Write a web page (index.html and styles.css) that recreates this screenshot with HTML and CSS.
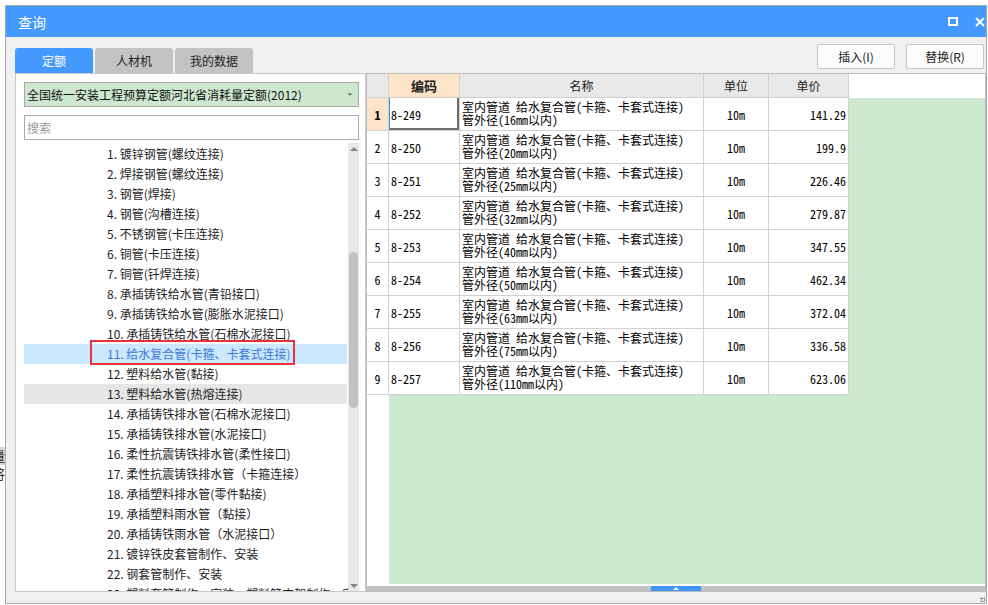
FILE: index.html
```html
<!DOCTYPE html>
<html lang="zh-CN">
<head>
<meta charset="utf-8">
<title>查询</title>
<link rel="stylesheet" href="styles.css">
</head>
<body>
<div class="bg-peek"><span>量</span><span>将</span></div>
<div class="window">
  <div class="titlebar">
    <span class="title">查询</span>
    <div class="win-ctrls">
      <svg width="10" height="9" viewBox="0 0 10 9"><rect x="1" y="1" width="8" height="7" fill="none" stroke="#fff" stroke-width="2"/></svg>
      <svg width="10" height="10" viewBox="0 0 10 10"><path d="M1 1L9 9M9 1L1 9" stroke="#fff" stroke-width="2"/></svg>
    </div>
  </div>
  <div class="toolbar">
    <div class="tabs">
      <div class="tab active">定额</div>
      <div class="tab">人材机</div>
      <div class="tab">我的数据</div>
    </div>
    <div class="actions">
      <button class="btn">插入(I)</button>
      <button class="btn">替换(R)</button>
    </div>
  </div>
  <div class="panels">
    <div class="left">
      <div class="select"><span>全国统一安装工程预算定额河北省消耗量定额(2012)</span><i class="caret"></i></div>
      <div class="search">搜索</div>
      <div class="list">
        <ul class="items">
          <li>1. 镀锌钢管(螺纹连接)</li>
          <li>2. 焊接钢管(螺纹连接)</li>
          <li>3. 钢管(焊接)</li>
          <li>4. 钢管(沟槽连接)</li>
          <li>5. 不锈钢管(卡压连接)</li>
          <li>6. 铜管(卡压连接)</li>
          <li>7. 铜管(钎焊连接)</li>
          <li>8. 承插铸铁给水管(青铅接口)</li>
          <li>9. 承插铸铁给水管(膨胀水泥接口)</li>
          <li>10. 承插铸铁给水管(石棉水泥接口)</li>
          <li class="selected"><span class="boxed">11. 给水复合管(卡箍、卡套式连接)</span></li>
          <li>12. 塑料给水管(黏接)</li>
          <li class="hover">13. 塑料给水管(热熔连接)</li>
          <li>14. 承插铸铁排水管(石棉水泥接口)</li>
          <li>15. 承插铸铁排水管(水泥接口)</li>
          <li>16. 柔性抗震铸铁排水管(柔性接口)</li>
          <li>17. 柔性抗震铸铁排水管（卡箍连接）</li>
          <li>18. 承插塑料排水管(零件黏接)</li>
          <li>19. 承插塑料雨水管（黏接）</li>
          <li>20. 承插铸铁雨水管（水泥接口）</li>
          <li>21. 镀锌铁皮套管制作、安装</li>
          <li>22. 钢套管制作、安装</li>
          <li>23. 塑料套管制作、安装，塑料管支架制作、安装</li>
        </ul>
        <div class="vscroll">
          <i class="arr up"></i>
          <div class="track"><div class="thumb"></div></div>
          <i class="arr down"></i>
        </div>
      </div>
    </div>
    <div class="right">
      <div class="grid">
        <div class="c hd"></div>
        <div class="c hd sel">编码</div>
        <div class="c hd">名称</div>
        <div class="c hd">单位</div>
        <div class="c hd">单价</div>
        <div class="hfill"></div>

        <div class="c num sel">1</div><div class="c code focus">8-249</div><div class="c name">室内管道 给水复合管(卡箍、卡套式连接)<br>管外径(16mm以内)</div><div class="c unit">10m</div><div class="c price">141.29</div>
        <div class="c num">2</div><div class="c code">8-250</div><div class="c name">室内管道 给水复合管(卡箍、卡套式连接)<br>管外径(20mm以内)</div><div class="c unit">10m</div><div class="c price">199.9</div>
        <div class="c num">3</div><div class="c code">8-251</div><div class="c name">室内管道 给水复合管(卡箍、卡套式连接)<br>管外径(25mm以内)</div><div class="c unit">10m</div><div class="c price">226.46</div>
        <div class="c num">4</div><div class="c code">8-252</div><div class="c name">室内管道 给水复合管(卡箍、卡套式连接)<br>管外径(32mm以内)</div><div class="c unit">10m</div><div class="c price">279.87</div>
        <div class="c num">5</div><div class="c code">8-253</div><div class="c name">室内管道 给水复合管(卡箍、卡套式连接)<br>管外径(40mm以内)</div><div class="c unit">10m</div><div class="c price">347.55</div>
        <div class="c num">6</div><div class="c code">8-254</div><div class="c name">室内管道 给水复合管(卡箍、卡套式连接)<br>管外径(50mm以内)</div><div class="c unit">10m</div><div class="c price">462.34</div>
        <div class="c num">7</div><div class="c code">8-255</div><div class="c name">室内管道 给水复合管(卡箍、卡套式连接)<br>管外径(63mm以内)</div><div class="c unit">10m</div><div class="c price">372.04</div>
        <div class="c num">8</div><div class="c code">8-256</div><div class="c name">室内管道 给水复合管(卡箍、卡套式连接)<br>管外径(75mm以内)</div><div class="c unit">10m</div><div class="c price">336.58</div>
        <div class="c num">9</div><div class="c code">8-257</div><div class="c name">室内管道 给水复合管(卡箍、卡套式连接)<br>管外径(110mm以内)</div><div class="c unit">10m</div><div class="c price">623.06</div>

        <div class="rfill"></div>
        <div class="bfill"></div>
      </div>
      <div class="hscroll"><div class="hthumb"><i></i></div></div>
    </div>
  </div>
  <div class="footer"><i class="grip"></i></div>
</div>
</body>
</html>
```

FILE: styles.css
```css
* { box-sizing: border-box; margin: 0; padding: 0; }
html, body { width: 988px; height: 605px; overflow: hidden; }
body {
  background: #fff;
  font-family: "Noto Sans CJK SC", "Microsoft YaHei", sans-serif;
  font-size: 12px;
  color: #222;
  padding: 5px 0 0 5px;
  position: relative;
}

.bg-peek {
  position: absolute;
  left: 0;
  top: 447px;
  width: 5px;
  height: 40px;
  overflow: hidden;
  display: flex;
  flex-direction: column;
  font-size: 13px;
  line-height: 18px;
}
.bg-peek span { display: block; margin-left: -8px; background: #d6d6d6; }
.bg-peek span + span { background: #fff; }

.window {
  width: 982px;
  height: 599px;
  border: 1px solid #a8a8a8;
  background: #f0f0f0;
  display: flex;
  flex-direction: column;
}

.titlebar {
  height: 31px;
  flex: none;
  background: #4499fe;
  color: #fff;
  display: flex;
  align-items: center;
  justify-content: space-between;
  padding: 0 1px 0 12px;
}
.title { font-size: 14px; }
.win-ctrls { display: flex; align-items: center; gap: 17px; }
.win-ctrls svg { display: block; }

.toolbar {
  height: 36px;
  flex: none;
  display: flex;
  justify-content: space-between;
  padding-left: 9px;
}
.tabs { display: flex; align-items: flex-end; gap: 2px; }
.tab {
  width: 78px;
  height: 25px;
  background: #c3c3c3;
  border-radius: 3px 3px 0 0;
  display: flex;
  align-items: center;
  justify-content: center;
  color: #222;
}
.tab.active { background: #4499fe; color: #fff; }
.actions { display: flex; gap: 11px; padding: 7px 2px 0 0; align-items: flex-start; }
.btn {
  width: 78px;
  height: 25px;
  background: #fdfdfd;
  border: 1px solid #c6c6c6;
  border-radius: 2px;
  font: inherit;
  color: #222;
}

.panels { height: 519px; flex: none; display: flex; padding-left: 9px; }

.left {
  width: 351px;
  flex: none;
  border: 1px solid #c9c9c9;
  background: #fff;
  padding: 8px 6px 0 8px;
  display: flex;
  flex-direction: column;
}
.select {
  height: 25px;
  flex: none;
  background: #cde8cf;
  border: 1px solid #a9a9a9;
  display: flex;
  align-items: center;
  justify-content: space-between;
  padding: 0 5px 0 2px;
  color: #111;
}
.caret {
  width: 0; height: 0;
  border-left: 3px solid transparent;
  border-right: 3px solid transparent;
  border-top: 3px solid #8a8a8a;
}
.search {
  height: 25px;
  flex: none;
  margin-top: 8px;
  border: 1px solid #a9a9a9;
  padding-left: 2px;
  display: flex;
  align-items: center;
  color: #9a9a9a;
}
.list { flex: 1; margin-top: 3px; display: flex; overflow: hidden; min-height: 0; }
.items { flex: 1; list-style: none; padding-top: 1px; overflow: hidden; }
.items li {
  height: 20px;
  line-height: 20px;
  padding-left: 83px;
  margin-right: 1px;
  white-space: nowrap;
  color: #1e1e1e;
}
.items li.selected { background: #cce8ff; color: #3b79d8; }
.items li.hover { background: #e6e6e6; }
.boxed { position: relative; display: inline-block; }
.boxed::after {
  content: "";
  position: absolute;
  left: -17px;
  right: -5px;
  top: -4px;
  bottom: -1px;
  border: 2px solid #e8333b;
}

.vscroll { width: 11px; flex: none; background: #e8e8e8; display: flex; flex-direction: column; align-items: center; }
.arr { width: 0; height: 0; border-left: 4px solid transparent; border-right: 4px solid transparent; flex: none; }
.arr.up { border-bottom: 4px solid #858585; margin: 4px 0 2px; }
.arr.down { border-top: 4px solid #858585; margin: 2px 0 3px; }
.track { flex: 1; width: 100%; display: flex; justify-content: center; }
.thumb { width: 9px; height: 156px; margin-top: 99px; background: #c1c1c1; border-radius: 5px; }

.right {
  flex: 1;
  border: 1px solid #bcbcbc;
  background: #fff;
  display: flex;
  flex-direction: column;
}
.grid {
  flex: 1;
  display: grid;
  grid-template-columns: 22px 71px 244px 65px 80px 1fr;
  grid-template-rows: 24px repeat(9, 33px) 1fr;
  font-family: "Noto Sans Mono CJK SC", "Noto Sans CJK SC", monospace;
  font-size: 12px;
  color: #000;
}
.c {
  border-right: 1px solid #d2d2d2;
  border-bottom: 1px solid #d2d2d2;
  display: flex;
  align-items: center;
  overflow: hidden;
  white-space: nowrap;
}
.hd { background: #e8e8e8; justify-content: center; color: #222; }
.hd.sel { background: #fde4c6; font-weight: bold; font-size: 13px; }
.num { justify-content: center; }
.num.sel { background: #fde4c6; font-weight: bold; }
.code { padding-left: 2px; }
.code.focus { box-shadow: inset 1px 0 #3f8ee6, inset -2px -2px #6e6e6e; }
.name { padding: 0 0 2px 2px; line-height: 13px; }
.unit { justify-content: center; }
.price { justify-content: flex-end; padding-right: 2px; }
.hfill { background: #fff; }
.rfill { grid-column: 6; grid-row: 2 / -1; background: #cde8d0; }
.bfill { grid-column: 2 / 6; grid-row: 11; background: #cde8d0; }

.hscroll { height: 5px; flex: none; margin-top: 2px; background: #c3c3c3; display: flex; }
.hthumb { width: 50px; margin-left: 284px; background: #3f96fb; display: flex; justify-content: center; align-items: center; }
.hthumb i { width: 0; height: 0; border-left: 3px solid transparent; border-right: 3px solid transparent; border-bottom: 3px solid #fff; }

.footer { flex: 1; display: flex; justify-content: flex-end; align-items: flex-end; padding: 0 1px 1px 0; }
.grip { width: 5px; height: 5px; background: radial-gradient(circle, #a0a0a0 1px, transparent 1.2px) 0 0 / 3px 3px; }
```
